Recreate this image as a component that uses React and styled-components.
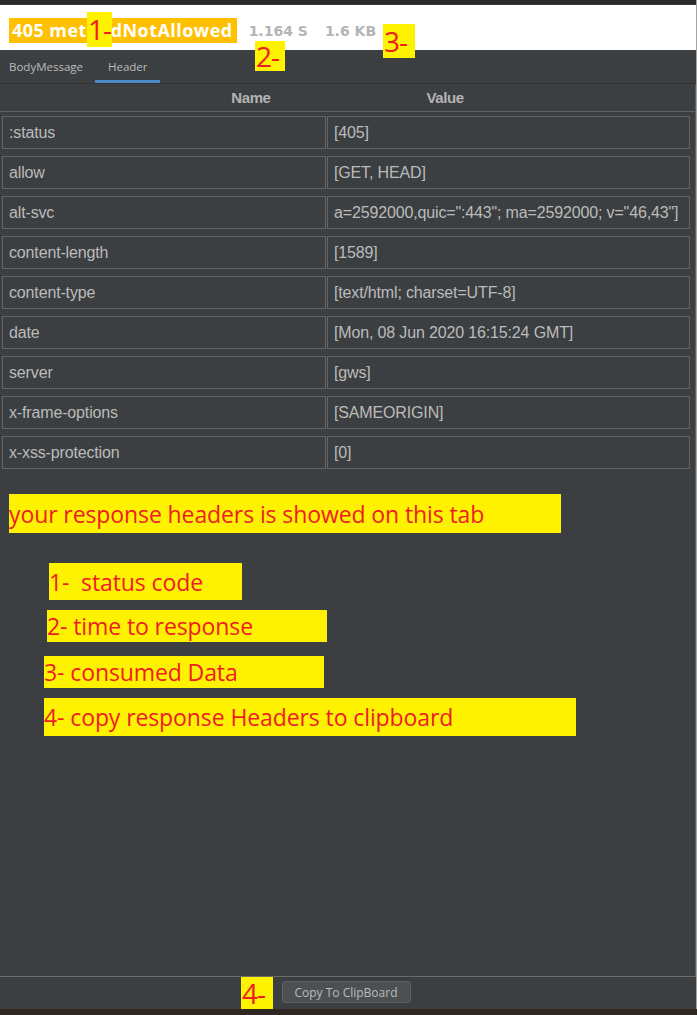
import React from 'react';
import styled, { createGlobalStyle } from 'styled-components';

const GlobalStyle = createGlobalStyle`
  html, body {
    margin: 0;
    padding: 0;
    background: #2e2620;
  }
  * { box-sizing: border-box; }
`;

const Window = styled.div`
  position: relative;
  width: 697px;
  height: 1009px;
  display: flex;
  flex-direction: column;
  background: #3c3f41;
  border-right: 1px solid #a3a3a3;
  font-family: 'Liberation Sans', Arial, sans-serif;
`;

const TopStrip = styled.div`
  height: 5px;
  background: #2b2b2b;
  border-bottom: 1px solid #3a3a3a;
`;

const StatusBar = styled.div`
  height: 45px;
  background: #fff;
  display: flex;
  align-items: center;
  padding-left: 9px;
  padding-top: 6px;
`;

const StatusBadge = styled.span`
  background: #ffc000;
  color: #fff;
  font-family: 'Open Sans', 'Noto Sans', sans-serif;
  font-weight: 700;
  font-size: 18px;
  letter-spacing: 0.45px;
  line-height: 25px;
  padding: 0 4px 0 3px;
  margin-right: 12px;
`;

const Metric = styled.span`
  color: #b4b4b4;
  font-family: 'DejaVu Sans', Verdana, sans-serif;
  font-weight: 700;
  font-size: 14px;
  margin-right: 17px;
`;

const Marker = styled.span`
  position: absolute;
  top: ${(p) => p.$top}px;
  left: ${(p) => p.$left}px;
  width: ${(p) => p.$w}px;
  height: ${(p) => p.$h}px;
  background: #fff200;
  color: #ee1c24;
  font-family: 'Open Sans', 'Noto Sans', sans-serif;
  font-size: 28px;
  letter-spacing: -1px;
  line-height: ${(p) => p.$h}px;
  padding-left: 1px;
  white-space: nowrap;
`;

const Tabs = styled.div`
  height: 34px;
  display: flex;
  align-items: stretch;
  border-bottom: 1px solid #323232;
  padding-left: 2px;
`;

const Tab = styled.div`
  display: flex;
  align-items: center;
  padding: 2px 7px 0 7px;
  margin-right: 5px;
  font-family: 'Open Sans', 'Noto Sans', sans-serif;
  font-size: 11.5px;
  color: #bbbbbb;
  border-bottom: 3px solid ${(p) => (p.$active ? '#4a88c7' : 'transparent')};
  ${(p) => p.$active && 'padding: 2px 12px 0 13px;'}
`;

const Panel = styled.div`
  flex: 1;
  display: flex;
  flex-direction: column;
  border-bottom: 1px solid #6b6b6b;
  border-right: 1px solid #5c5f61;
`;

const TableHead = styled.div`
  height: 28px;
  display: flex;
  justify-content: center;
  align-items: center;
  gap: 156px;
  border-bottom: 1px solid #5f6264;
`;

const HeadCell = styled.span`
  color: #b4b4b4;
  font-weight: 700;
  font-size: 15px;
  letter-spacing: -0.4px;
`;

const Rows = styled.div`
  display: flex;
  flex-direction: column;
  gap: 7px;
  padding: 4px 0 0 2px;
`;

const Row = styled.div`
  display: flex;
  gap: 1px;
`;

const Cell = styled.div`
  width: ${(p) => p.$w}px;
  height: 33px;
  border: 1px solid #646464;
  display: flex;
  align-items: center;
  padding-left: 6px;
  color: #bbbbbb;
  font-size: 16px;
  letter-spacing: -0.15px;
  white-space: nowrap;
  overflow: hidden;
`;

const Notes = styled.div`
  display: flex;
  flex-direction: column;
  align-items: flex-start;
  padding-top: 25px;
`;

const Note = styled.div`
  width: ${(p) => p.$w}px;
  height: ${(p) => p.$h}px;
  margin-left: ${(p) => p.$left}px;
  margin-top: ${(p) => p.$gap}px;
  background: #fff200;
  color: #ee1c24;
  font-family: 'Open Sans', 'Noto Sans', sans-serif;
  font-size: 23px;
  letter-spacing: -0.1px;
  display: flex;
  align-items: center;
  white-space: pre;
`;

const Footer = styled.div`
  height: 32px;
  display: flex;
  justify-content: center;
  align-items: center;
  padding: 0 4px 2px 0;
`;

const CopyButton = styled.button`
  width: 129px;
  height: 22px;
  background: #4c5052;
  border: 1px solid #5e6163;
  border-radius: 3px;
  color: #bbbbbb;
  font-family: 'Open Sans', 'Noto Sans', sans-serif;
  font-size: 12px;
  padding: 0;
`;

const headers = [
  [':status', '[405]'],
  ['allow', '[GET, HEAD]'],
  ['alt-svc', 'a=2592000,quic=":443"; ma=2592000; v="46,43"]'],
  ['content-length', '[1589]'],
  ['content-type', '[text/html; charset=UTF-8]'],
  ['date', '[Mon, 08 Jun 2020 16:15:24 GMT]'],
  ['server', '[gws]'],
  ['x-frame-options', '[SAMEORIGIN]'],
  ['x-xss-protection', '[0]'],
];

const notes = [
  { text: 'your response headers is showed on this tab', w: 552, h: 39, left: 9, gap: 0 },
  { text: '1-  status code', w: 193, h: 37, left: 49, gap: 30 },
  { text: '2- time to response', w: 280, h: 32, left: 47, gap: 10 },
  { text: '3- consumed Data', w: 280, h: 32, left: 44, gap: 14 },
  { text: '4- copy response Headers to clipboard', w: 532, h: 38, left: 44, gap: 10 },
];

export default function App() {
  return (
    <>
      <GlobalStyle />
      <Window>
        <TopStrip />
        <StatusBar>
          <StatusBadge>405 methodNotAllowed</StatusBadge>
          <Metric>1.164 S</Metric>
          <Metric>1.6 KB</Metric>
        </StatusBar>
        <Tabs>
          <Tab>BodyMessage</Tab>
          <Tab $active>Header</Tab>
        </Tabs>
        <Panel>
          <TableHead>
            <HeadCell>Name</HeadCell>
            <HeadCell>Value</HeadCell>
          </TableHead>
          <Rows>
            {headers.map(([name, value]) => (
              <Row key={name}>
                <Cell $w={324}>{name}</Cell>
                <Cell $w={363}>{value}</Cell>
              </Row>
            ))}
          </Rows>
          <Notes>
            {notes.map((n) => (
              <Note key={n.text} $w={n.w} $h={n.h} $left={n.left} $gap={n.gap}>
                {n.text}
              </Note>
            ))}
          </Notes>
        </Panel>
        <Footer>
          <CopyButton>Copy To ClipBoard</CopyButton>
        </Footer>

        <Marker $top={12} $left={87} $w={25} $h={35}>1-</Marker>
        <Marker $top={41} $left={255} $w={30} $h={30}>2-</Marker>
        <Marker $top={24} $left={383} $w={32} $h={34}>3-</Marker>
        <Marker $top={977} $left={241} $w={32} $h={32}>4-</Marker>
      </Window>
    </>
  );
}
